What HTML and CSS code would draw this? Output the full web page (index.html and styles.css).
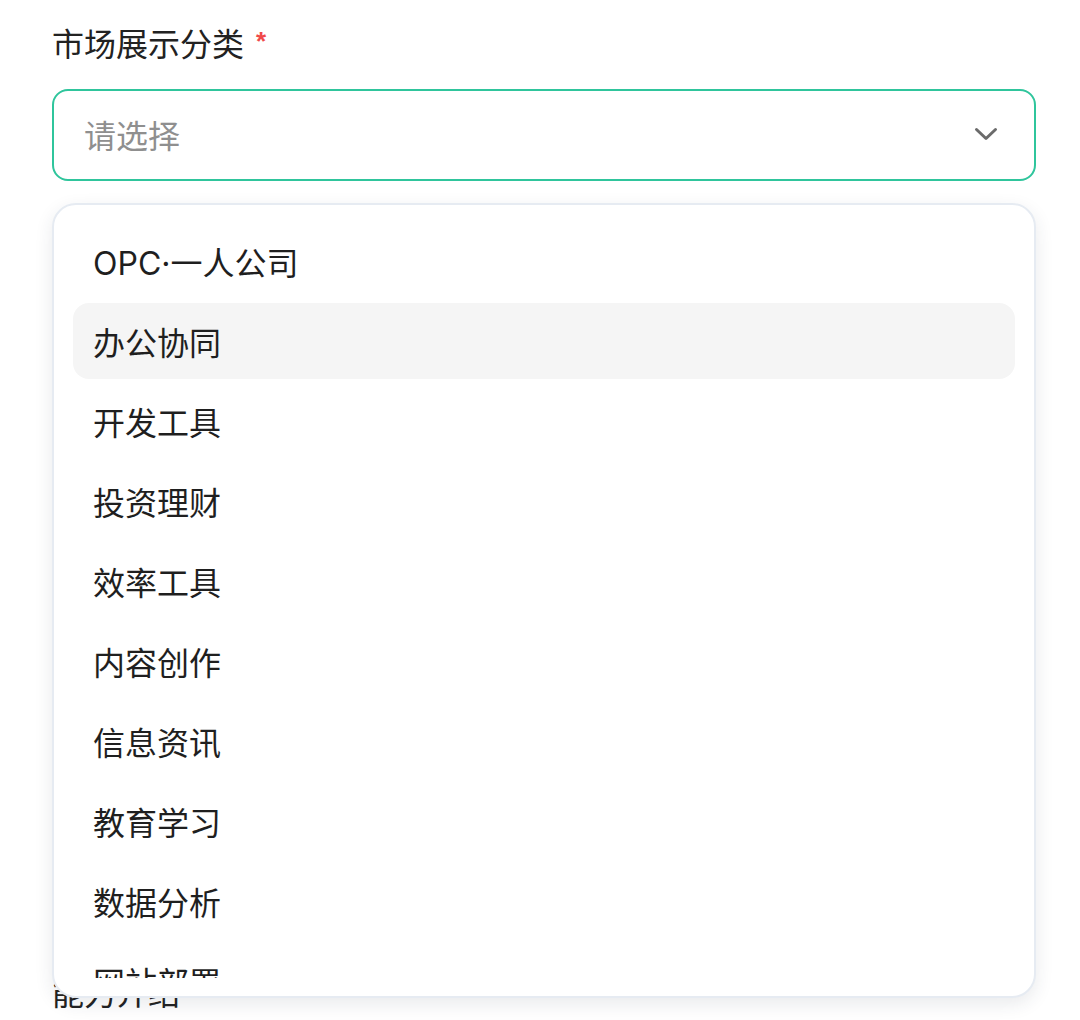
FILE: index.html
```html
<!DOCTYPE html>
<html lang="zh-CN">
<head>
<meta charset="utf-8">
<title>市场展示分类</title>
<link rel="stylesheet" href="styles.css">
</head>
<body>
<form class="form">
  <div class="form-item">
    <label class="label">市场展示分类<span class="required">*</span></label>
    <div class="select-wrap">
      <div class="select">
        <span class="placeholder">请选择</span>
        <svg class="chevron" width="24" height="14" viewBox="0 0 24 14"><polyline points="2.5,2.5 12,11.5 21.5,2.5" fill="none" stroke="#6b6b6b" stroke-width="3" stroke-linecap="round" stroke-linejoin="round"/></svg>
      </div>
      <div class="dropdown">
        <ul class="options">
          <li class="option">OPC·一人公司</li>
          <li class="option hover">办公协同</li>
          <li class="option">开发工具</li>
          <li class="option">投资理财</li>
          <li class="option">效率工具</li>
          <li class="option">内容创作</li>
          <li class="option">信息资讯</li>
          <li class="option">教育学习</li>
          <li class="option">数据分析</li>
          <li class="option">网站部署</li>
          <li class="option">生活服务</li>
        </ul>
      </div>
    </div>
  </div>
  <div class="covered-fields"></div>
  <div class="form-item">
    <label class="label">能力介绍</label>
  </div>
</form>
</body>
</html>
```
FILE: styles.css
```css
html, body {
  margin: 0;
  padding: 0;
  background: #ffffff;
}
body {
  font-family: "Inter", "Noto Sans CJK SC", sans-serif;
  color: #1f1f1f;
}
.form {
  padding: 18px 44px 120px 52px;
  display: flex;
  flex-direction: column;
}
.form-item {
  display: flex;
  flex-direction: column;
}
.label {
  font-family: "Noto Sans CJK SC", sans-serif;
  font-size: 32px;
  line-height: 48px;
  color: #222222;
  display: flex;
  align-items: flex-start;
}
.required {
  color: #f0494a;
  font-size: 26px;
  line-height: 34px;
  margin-left: 12px;
  margin-top: 6px;
  font-family: "Liberation Sans", sans-serif;
  font-weight: bold;
}
.select-wrap {
  position: relative;
  margin-top: 23px;
}
.select {
  box-sizing: border-box;
  height: 92px;
  border: 2px solid #2fc59c;
  border-radius: 16px;
  display: flex;
  align-items: center;
  justify-content: space-between;
  padding: 0 36px 2px 30px;
  background: #fff;
}
.placeholder {
  font-family: "Noto Sans CJK SC", sans-serif;
  font-size: 32px;
  color: #8f8f8f;
}
.chevron {
  display: block;
}
.dropdown {
  position: absolute;
  left: 0;
  right: 0;
  top: calc(100% + 22px);
  box-sizing: border-box;
  height: 795px;
  padding: 20px 19px;
  background: #fff;
  border: 2px solid #e6ebf2;
  border-radius: 24px;
  box-shadow: 0 6px 18px rgba(40, 50, 70, 0.10);
  z-index: 10;
}
.options {
  list-style: none;
  margin: -2px 0 0;
  padding: 0;
  height: 755px;
  overflow: hidden;
  display: flex;
  flex-direction: column;
  gap: 4px;
}
.option {
  flex: none;
  height: 76px;
  display: flex;
  align-items: center;
  padding-left: 20px;
  font-size: 32px;
  color: #1f1f1f;
  border-radius: 16px;
}
.option.hover {
  background: #f5f5f5;
}
.covered-fields {
  height: 786px;
}
```
